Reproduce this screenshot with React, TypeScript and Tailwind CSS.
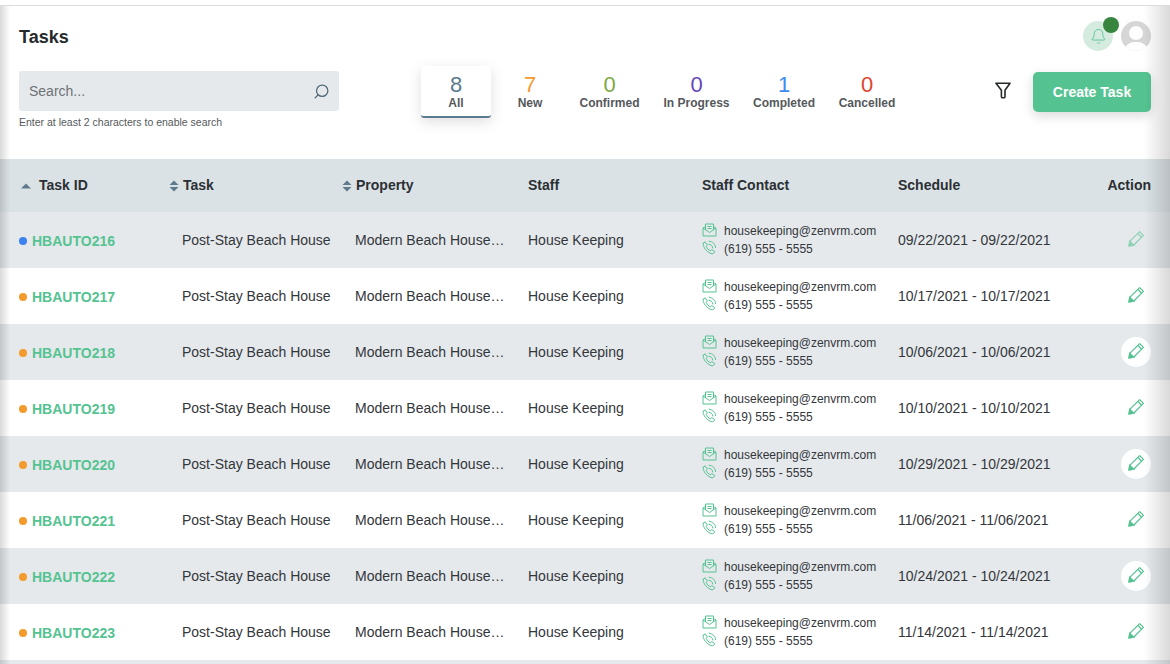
import React from 'react';
import { Bell, Search } from 'lucide-react';

const gridCols = 'grid grid-cols-[168px_173px_187px_174px_196px_1fr] items-center';

const tabs = [
  { label: 'All', count: 8, color: 'text-[#5b7a8f]', width: 'w-[70px]', active: true },
  { label: 'New', count: 7, color: 'text-[#f49b2c]', width: 'w-[78px]' },
  { label: 'Confirmed', count: 0, color: 'text-[#7ea944]', width: 'w-[81px]' },
  { label: 'In Progress', count: 0, color: 'text-[#6747b8]', width: 'w-[93px]' },
  { label: 'Completed', count: 1, color: 'text-[#3b8bf0]', width: 'w-[82px]' },
  { label: 'Cancelled', count: 0, color: 'text-[#e0452f]', width: 'w-[84px]' },
];

const rows = [
  { id: 'HBAUTO216', dot: 'bg-[#3b82f0]', schedule: '09/22/2021 - 09/22/2021', faded: true },
  { id: 'HBAUTO217', dot: 'bg-[#f49b2c]', schedule: '10/17/2021 - 10/17/2021' },
  { id: 'HBAUTO218', dot: 'bg-[#f49b2c]', schedule: '10/06/2021 - 10/06/2021', circle: true },
  { id: 'HBAUTO219', dot: 'bg-[#f49b2c]', schedule: '10/10/2021 - 10/10/2021' },
  { id: 'HBAUTO220', dot: 'bg-[#f49b2c]', schedule: '10/29/2021 - 10/29/2021', circle: true },
  { id: 'HBAUTO221', dot: 'bg-[#f49b2c]', schedule: '11/06/2021 - 11/06/2021' },
  { id: 'HBAUTO222', dot: 'bg-[#f49b2c]', schedule: '10/24/2021 - 10/24/2021', circle: true },
  { id: 'HBAUTO223', dot: 'bg-[#f49b2c]', schedule: '11/14/2021 - 11/14/2021' },
];

const SortIcon: React.FC = () => (
  <svg width="10" height="12" viewBox="0 0 10 12" className="shrink-0 fill-[#5f7a8c]">
    <path d="M5 0.5 L9.5 5 H0.5 Z" />
    <path d="M5 11.5 L0.5 7 H9.5 Z" />
  </svg>
);

const MailIcon: React.FC = () => (
  <svg width="15" height="14" viewBox="0 0 15 14" fill="none" stroke="#55c391" strokeWidth="1" className="-mt-[3px] shrink-0">
    <path d="M1 5 V13 H14 V5 L7.5 9.5 Z" strokeLinejoin="round" />
    <path d="M1 5 L3.5 3.5 M14 5 L11.5 3.5" />
    <path d="M3.5 7 V1 H11.5 V7" />
    <path d="M5.5 3.5 H9.5 M5.5 5.5 H9.5" />
  </svg>
);

const PhoneIcon: React.FC = () => (
  <svg width="15" height="15" viewBox="0 0 15 15" fill="none" stroke="#55c391" strokeWidth="1" strokeLinecap="round" className="-mt-[3px] shrink-0">
    <path d="M1.4 3.2 L3.2 1.8 L5.4 5 L4.2 6.4 C4.8 8 6.4 9.8 8.4 10.8 L9.8 9.6 L12.8 11.6 L11.6 13.4 C10.4 14.4 7.8 13.6 5.2 11.2 C2.2 8.4 0.4 5 1.4 3.2 Z" strokeLinejoin="round" />
    <path d="M7 4.2 C9 4.4 10.6 6 10.8 8" />
    <path d="M7.2 1.2 C10.6 1.4 13.4 4.2 13.6 7.6" />
  </svg>
);

const PencilIcon: React.FC<{ faded?: boolean }> = ({ faded }) => (
  <svg width="17" height="17" viewBox="0 0 17 17" fill="none" stroke="#55c391" strokeWidth="1.25" className={`-mt-[4px] ${faded ? 'opacity-60' : ''}`}>
    <path d="M1 16 L1.8 11.4 L11.6 1.6 L15.4 5.4 L5.6 15.2 Z" strokeLinejoin="round" />
    <path d="M9.8 3.4 L13.6 7.2" />
    <path d="M1 16 L1.8 11.4 L5.6 15.2 Z" fill="#55c391" />
  </svg>
);

const FunnelIcon: React.FC = () => (
  <svg width="16" height="17" viewBox="0 0 16 17" fill="none" stroke="#26292c" strokeWidth="1.6" strokeLinejoin="round">
    <path d="M1 1.2 H15 L10 8.2 V14.4 Q10 15.8 8.8 15.8 H7.8 Q6.4 15.8 6.4 14.4 V8.2 Z" />
  </svg>
);

const Avatar: React.FC = () => (
  <div className="relative h-[30px] w-[30px] overflow-hidden rounded-full bg-[#d6d6d6]">
    <div className="absolute left-[8px] top-[5px] h-[14px] w-[14px] rounded-full bg-white" />
    <div className="absolute left-[3px] top-[21px] h-[20px] w-[24px] rounded-full bg-white" />
  </div>
);

const App: React.FC = () => {
  return (
    <div className="relative h-[664px] w-[1170px] overflow-hidden bg-white font-['Liberation_Sans',Arial,sans-serif] text-[#33363a]">
      <div className="h-[6px] border-b border-[#dcdcdc]" />

      <div className="flex h-[153px] flex-col px-[19px]">
        <div className="flex h-[58px] items-start justify-between">
          <h1 className="mt-[20px] text-[18px] leading-[22px] font-bold text-[#26292c]">Tasks</h1>
          <div className="mt-[15px] flex items-center gap-[8px]">
            <div className="relative flex h-[30px] w-[30px] items-center justify-center rounded-full bg-[#d5ebe0]">
              <Bell size={17} strokeWidth={1.25} className="text-[#55c391]" />
              <span className="absolute -top-[4px] -right-[6px] h-4 w-4 rounded-full bg-[#38853f]" />
            </div>
            <Avatar />
          </div>
        </div>

        <div className="flex items-start">
          <div className="w-[320px] shrink-0 pt-[7px]">
            <div className="flex h-[40px] items-center justify-between rounded-[3px] bg-[#e5e9ec] pr-[9px] pl-[10px]">
              <span className="text-[14px] text-[#6d7276]">Search...</span>
              <Search size={17} strokeWidth={1.75} className="-scale-x-100 text-[#4f6675]" />
            </div>
            <p className="mt-[4px] text-[10.5px] leading-[14px] text-[#55595c]">Enter at least 2 characters to enable search</p>
          </div>

          <div className="mt-[2px] ml-[82px] flex items-start">
            {tabs.map((tab) => (
              <div
                key={tab.label}
                className={`flex h-[52px] shrink-0 flex-col items-center pt-[8px] ${tab.width} ${
                  tab.active ? 'rounded-[3px] border-b-2 border-[#5b7a8f] shadow-[0_4px_14px_rgba(0,0,0,0.13)]' : ''
                }`}
              >
                <span className={`text-[22px] leading-[22px] ${tab.color}`}>{tab.count}</span>
                <span className="text-[12px] leading-[14px] font-bold whitespace-nowrap text-[#55595c]">{tab.label}</span>
              </div>
            ))}
          </div>

          <div className="ml-[86px] pt-[18px]">
            <FunnelIcon />
          </div>

          <button className="mt-[8px] ml-[22px] h-[40px] w-[118px] rounded-[5px] bg-[#55c391] text-[14px] font-bold text-white shadow-[0_4px_12px_rgba(0,0,0,0.15)]">
            Create Task
          </button>
        </div>
      </div>

      <div className={`${gridCols} h-[53px] bg-[#dbe2e6] text-[14px] font-bold text-[#2b2f33]`}>
        <div className="flex items-center pl-[21px]">
          <svg width="10" height="6" viewBox="0 0 10 6" className="fill-[#5f7a8c]">
            <path d="M5 0.5 L10 5.5 H0 Z" />
          </svg>
          <span className="ml-[8px]">Task ID</span>
        </div>
        <div className="flex items-center gap-[4px] pl-[1px]">
          <SortIcon />
          <span>Task</span>
        </div>
        <div className="flex items-center gap-[4px] pl-[1px]">
          <SortIcon />
          <span>Property</span>
        </div>
        <div>Staff</div>
        <div>Staff Contact</div>
        <div className="flex items-center justify-between pr-[19px]">
          <span>Schedule</span>
          <span>Action</span>
        </div>
      </div>

      <div>
        {rows.map((row, i) => (
          <div key={row.id} className={`${gridCols} h-[56px] text-[14px] ${i % 2 === 0 ? 'bg-[#e5e9ec]' : 'bg-white'}`}>
            <div className="flex items-center pl-[19px]">
              <span className={`mt-[2px] h-[8px] w-[8px] rounded-full ${row.dot}`} />
              <span className="mt-[2px] ml-[5px] font-bold text-[#55c391]">{row.id}</span>
            </div>
            <div className="pl-[14px]">Post-Stay Beach House</div>
            <div className="pl-[14px] whitespace-nowrap">Modern Beach House…</div>
            <div>House Keeping</div>
            <div className="flex flex-col gap-[2px] text-[12px] leading-[16px]">
              <div className="flex items-center gap-[7px]">
                <MailIcon />
                <span>housekeeping@zenvrm.com</span>
              </div>
              <div className="flex items-center gap-[7px]">
                <PhoneIcon />
                <span>(619) 555 - 5555</span>
              </div>
            </div>
            <div className="flex items-center justify-between pr-[19px] text-[14px]">
              <span>{row.schedule}</span>
              <span className={`flex h-[30px] w-[30px] items-center justify-center rounded-full ${row.circle ? 'bg-white' : ''}`}>
                <PencilIcon faded={row.faded} />
              </span>
            </div>
          </div>
        ))}
      </div>
      <div className="h-[4px] bg-[#e5e9ec]" />

      <div className="pointer-events-none absolute top-[6px] bottom-0 left-0 w-[10px] bg-gradient-to-r from-black/15 to-transparent" />
      <div className="pointer-events-none absolute top-[6px] right-0 bottom-0 w-[26px] bg-gradient-to-l from-black/15 to-transparent" />
    </div>
  );
};

export default App;
